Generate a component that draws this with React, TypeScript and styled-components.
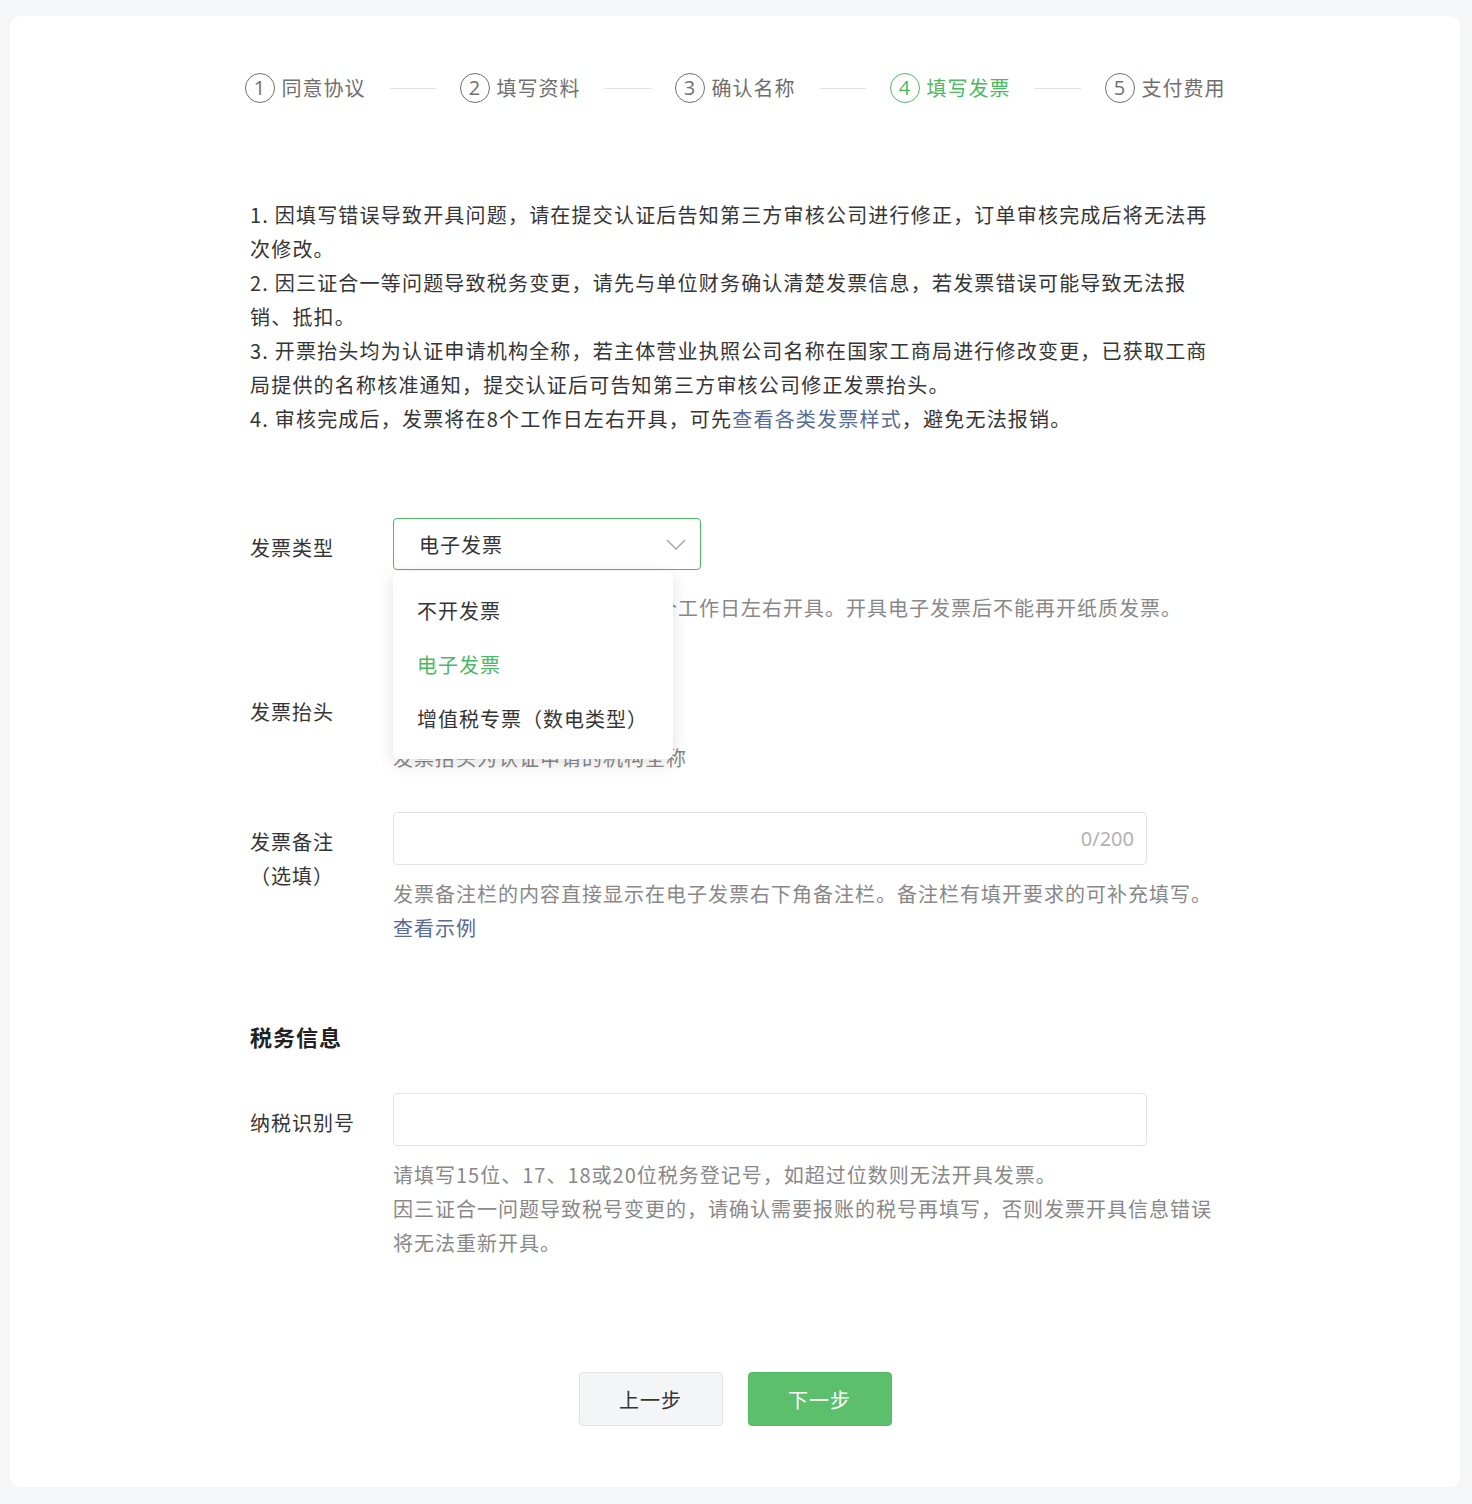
import React from "react";
import styled, { createGlobalStyle } from "styled-components";

const GlobalStyle = createGlobalStyle`
  html, body {
    margin: 0;
    padding: 0;
    background: #f5f6f7;
  }
  body {
    padding: 16px 12px 18px 10px;
    font-family: "Noto Sans CJK SC", "Noto Sans", sans-serif;
    color: #353535;
  }
  * { box-sizing: border-box; }
`;

const GREEN = "#4cb962";
const LINK = "#576b95";

const Card = styled.div`
  background: #fff;
  border-radius: 10px;
  padding: 57px 0 61px;
  min-height: 1470px;
`;

const Content = styled.div`
  width: 970px;
  margin: 0 auto;
`;

const Steps = styled.div`
  display: flex;
  align-items: center;
  justify-content: center;
  gap: 24px;
  height: 30px;
`;

const Step = styled.div<{ $active?: boolean }>`
  display: flex;
  align-items: center;
  gap: 7px;
  white-space: nowrap;
  flex: none;
  color: ${(p) => (p.$active ? GREEN : "#6f6f6f")};
  font-size: 20px;
  letter-spacing: 1px;
  line-height: 30px;
`;

const StepNum = styled.span<{ $active?: boolean }>`
  width: 30px;
  height: 30px;
  border-radius: 50%;
  border: 1.5px solid ${(p) => (p.$active ? GREEN : "#6f6f6f")};
  display: flex;
  align-items: center;
  justify-content: center;
  font-size: 20px;
  letter-spacing: 0;
  font-family: "Open Sans", "Noto Sans", sans-serif;
  line-height: 1;
`;

const StepLine = styled.span`
  width: 46px;
  flex: none;
  height: 1px;
  background: #e2e2e2;
`;

const Notice = styled.div`
  margin-top: 95px;
  font-size: 20px;
  line-height: 34px;
  letter-spacing: 1.2px;
  color: #353535;
`;

const Link = styled.a`
  color: ${LINK};
  text-decoration: none;
  cursor: pointer;
`;

const Form = styled.div`
  margin-top: 82px;
`;

const Row = styled.div<{ $top?: number }>`
  display: flex;
  align-items: flex-start;
  margin-top: ${(p) => p.$top ?? 0}px;
`;

const Label = styled.div`
  width: 143px;
  flex: none;
  padding-top: 13px;
  font-size: 20px;
  line-height: 34px;
  letter-spacing: 1px;
  color: #353535;
`;

const Field = styled.div`
  flex: 1;
  position: relative;
`;

const SelectBox = styled.div`
  width: 308px;
  height: 52px;
  border: 1px solid ${GREEN};
  border-radius: 4px;
  display: flex;
  align-items: center;
  justify-content: space-between;
  padding: 0 14px 0 25px;
  font-size: 20px;
  letter-spacing: 1px;
  color: #353535;
`;

const Menu = styled.div`
  position: absolute;
  top: 54px;
  left: 0;
  width: 280px;
  background: #fff;
  border-radius: 6px;
  box-shadow: 0 4px 18px rgba(0, 0, 0, 0.12);
  padding: 11px 0 14px;
  z-index: 10;
`;

const MenuItem = styled.div<{ $selected?: boolean }>`
  height: 54px;
  display: flex;
  align-items: center;
  padding-left: 24px;
  font-size: 20px;
  letter-spacing: 1px;
  color: ${(p) => (p.$selected ? GREEN : "#353535")};
`;

const Hint = styled.div<{ $top?: number }>`
  margin-top: ${(p) => p.$top ?? 12}px;
  font-size: 20px;
  line-height: 34px;
  letter-spacing: 1px;
  color: #888;
`;

const Value = styled.div`
  height: 52px;
`;

const Input = styled.div`
  width: 754px;
  height: 53px;
  border: 1px solid #e3e3e3;
  border-radius: 4px;
  display: flex;
  align-items: center;
  justify-content: flex-end;
  padding-right: 12px;
`;

const Counter = styled.span`
  font-size: 20px;
  color: #b2b2b2;
  font-family: "Noto Sans", sans-serif;
`;

const SectionTitle = styled.div`
  margin-top: 74px;
  font-size: 22px;
  font-weight: 700;
  line-height: 34px;
  letter-spacing: 1px;
  color: #222;
`;

const Buttons = styled.div`
  display: flex;
  justify-content: center;
  gap: 25px;
  margin-top: 112px;
`;

const Button = styled.button<{ $primary?: boolean }>`
  width: 144px;
  height: 54px;
  border-radius: 4px;
  border: 1px solid ${(p) => (p.$primary ? "#53bb66" : "#e2e2e2")};
  background: ${(p) => (p.$primary ? "#5bbf6c" : "#f4f5f6")};
  color: ${(p) => (p.$primary ? "#fff" : "#353535")};
  font-family: inherit;
  font-size: 20px;
  letter-spacing: 1px;
  cursor: pointer;
`;

const steps = ["同意协议", "填写资料", "确认名称", "填写发票", "支付费用"];

export default function App() {
  return (
    <>
      <GlobalStyle />
      <Card>
        <Content>
          <Steps>
            {steps.map((s, i) => (
              <React.Fragment key={s}>
                {i > 0 && <StepLine />}
                <Step $active={i === 3}>
                  <StepNum $active={i === 3}>{i + 1}</StepNum>
                  {s}
                </Step>
              </React.Fragment>
            ))}
          </Steps>

          <Notice>
            1. 因填写错误导致开具问题，请在提交认证后告知第三方审核公司进行修正，订单审核完成后将无法再次修改。
            <br />
            2. 因三证合一等问题导致税务变更，请先与单位财务确认清楚发票信息，若发票错误可能导致无法报销、抵扣。
            <br />
            3. 开票抬头均为认证申请机构全称，若主体营业执照公司名称在国家工商局进行修改变更，已获取工商局提供的名称核准通知，提交认证后可告知第三方审核公司修正发票抬头。
            <br />
            4. 审核完成后，发票将在8个工作日左右开具，可先<Link>查看各类发票样式</Link>，避免无法报销。
          </Notice>

          <Form>
            <Row>
              <Label>发票类型</Label>
              <Field>
                <SelectBox>
                  电子发票
                  <svg width="20" height="11" viewBox="0 0 20 11" fill="none">
                    <polyline points="1,1 10,10 19,1" stroke="#a8a8a8" strokeWidth="1.5" />
                  </svg>
                </SelectBox>
                <Menu>
                  <MenuItem>不开发票</MenuItem>
                  <MenuItem $selected>电子发票</MenuItem>
                  <MenuItem>增值税专票（数电类型）</MenuItem>
                </Menu>
                <Hint $top={21}>审核完成后，电子发票将在8个工作日左右开具。开具电子发票后不能再开纸质发票。</Hint>
              </Field>
            </Row>

            <Row $top={57}>
              <Label>发票抬头</Label>
              <Field>
                <Value />
                <Hint $top={7}>发票抬头为认证申请的机构全称</Hint>
              </Field>
            </Row>

            <Row $top={37}>
              <Label>
                发票备注
                <br />
                （选填）
              </Label>
              <Field>
                <Input>
                  <Counter>0/200</Counter>
                </Input>
                <Hint>
                  发票备注栏的内容直接显示在电子发票右下角备注栏。备注栏有填开要求的可补充填写。
                  <br />
                  <Link>查看示例</Link>
                </Hint>
              </Field>
            </Row>

            <SectionTitle>税务信息</SectionTitle>

            <Row $top={40}>
              <Label>纳税识别号</Label>
              <Field>
                <Input />
                <Hint>
                  请填写15位、17、18或20位税务登记号，如超过位数则无法开具发票。
                  <br />
                  因三证合一问题导致税号变更的，请确认需要报账的税号再填写，否则发票开具信息错误将无法重新开具。
                </Hint>
              </Field>
            </Row>
          </Form>

          <Buttons>
            <Button>上一步</Button>
            <Button $primary>下一步</Button>
          </Buttons>
        </Content>
      </Card>
    </>
  );
}
